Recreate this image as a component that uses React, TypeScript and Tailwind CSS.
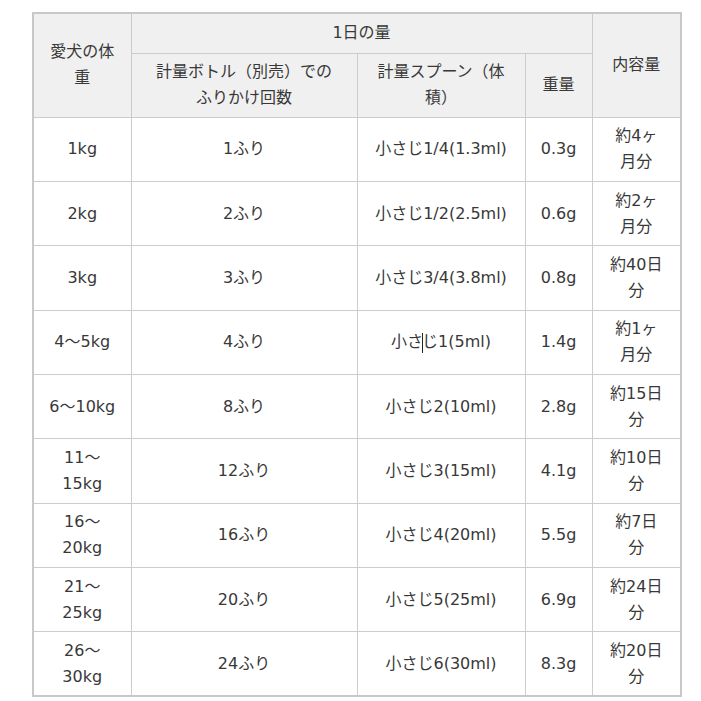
const rows: { weight: string[]; shakes: string; spoon: React.ReactNode; grams: string; supply: string[] }[] = [
  { weight: ["1kg"], shakes: "1ふり", spoon: "小さじ1/4(1.3ml)", grams: "0.3g", supply: ["約4ヶ", "月分"] },
  { weight: ["2kg"], shakes: "2ふり", spoon: "小さじ1/2(2.5ml)", grams: "0.6g", supply: ["約2ヶ", "月分"] },
  { weight: ["3kg"], shakes: "3ふり", spoon: "小さじ3/4(3.8ml)", grams: "0.8g", supply: ["約40日", "分"] },
  {
    weight: ["4～5kg"],
    shakes: "4ふり",
    spoon: (
      <>
        小さ
        <span className="inline-block w-px h-[20px] bg-[#222] align-middle -mx-px" />
        じ1(5ml)
      </>
    ),
    grams: "1.4g",
    supply: ["約1ヶ", "月分"],
  },
  { weight: ["6～10kg"], shakes: "8ふり", spoon: "小さじ2(10ml)", grams: "2.8g", supply: ["約15日", "分"] },
  { weight: ["11～", "15kg"], shakes: "12ふり", spoon: "小さじ3(15ml)", grams: "4.1g", supply: ["約10日", "分"] },
  { weight: ["16～", "20kg"], shakes: "16ふり", spoon: "小さじ4(20ml)", grams: "5.5g", supply: ["約7日", "分"] },
  { weight: ["21～", "25kg"], shakes: "20ふり", spoon: "小さじ5(25ml)", grams: "6.9g", supply: ["約24日", "分"] },
  { weight: ["26～", "30kg"], shakes: "24ふり", spoon: "小さじ6(30ml)", grams: "8.3g", supply: ["約20日", "分"] },
];

function Lines({ lines }: { lines: string[] }) {
  return (
    <>
      {lines.map((l, i) => (
        <span key={i} className="block">
          {l}
        </span>
      ))}
    </>
  );
}

const th = "border border-[#cccccc] bg-[#f0f0f0] font-normal text-center align-middle p-0";
const td = "border border-[#cccccc] text-center align-middle p-0";

export default function App() {
  return (
    <div
      className="bg-white w-[701px] h-[701px] pt-[12px] pl-[32px] text-[#383838] text-[16px] leading-[26px]"
      style={{ fontFamily: '"DejaVu Sans", "Noto Sans CJK JP", sans-serif' }}
    >
      <table className="border-collapse border-2 border-[#c8c8c8] w-[648px] table-fixed">
        <colgroup>
          <col className="w-[98px]" />
          <col className="w-[226px]" />
          <col className="w-[168px]" />
          <col className="w-[67px]" />
          <col className="w-[89px]" />
        </colgroup>
        <thead>
          <tr className="h-[40px]">
            <th rowSpan={2} className={th}>
              <Lines lines={["愛犬の体", "重"]} />
            </th>
            <th colSpan={3} className={th}>
              1日の量
            </th>
            <th rowSpan={2} className={th}>
              内容量
            </th>
          </tr>
          <tr className="h-[64px]">
            <th className={th}>
              <Lines lines={["計量ボトル（別売）での", "ふりかけ回数"]} />
            </th>
            <th className={th}>
              <Lines lines={["計量スプーン（体", "積）"]} />
            </th>
            <th className={th}>重量</th>
          </tr>
        </thead>
        <tbody>
          {rows.map((r, i) => (
            <tr key={i} className="h-[64.35px]">
              <td className={td}>
                <Lines lines={r.weight} />
              </td>
              <td className={td}>{r.shakes}</td>
              <td className={td}>{r.spoon}</td>
              <td className={td}>{r.grams}</td>
              <td className={td}>
                <Lines lines={r.supply} />
              </td>
            </tr>
          ))}
        </tbody>
      </table>
    </div>
  );
}
